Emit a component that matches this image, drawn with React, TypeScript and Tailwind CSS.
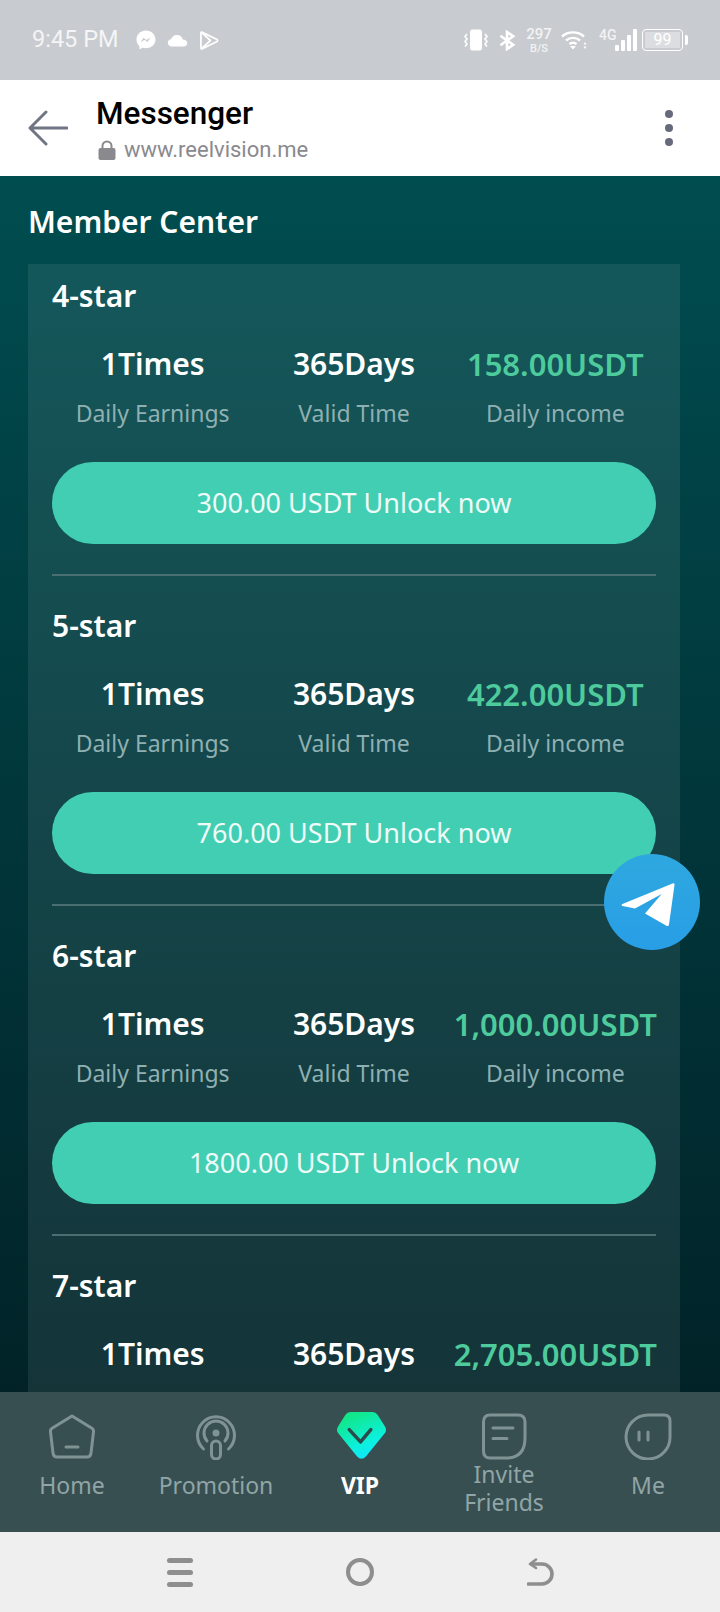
import type { ReactNode } from "react";

const font = { ubuntu: "font-['Noto_Sans',sans-serif]", roboto: "font-['Roboto',sans-serif]" };

const plans = [
  { name: "4-star", income: "158.00USDT", price: "300.00" },
  { name: "5-star", income: "422.00USDT", price: "760.00" },
  { name: "6-star", income: "1,000.00USDT", price: "1800.00" },
];

function StatusBar() {
  return (
    <div className="h-[80px] shrink-0 bg-[#c8cbcf] flex items-center justify-between pl-[32px] pr-[32px] text-white">
      <div className="flex items-center">
        <span className={`${font.roboto} text-[23.5px] leading-none text-[#f4f5f6]`}>9:45 PM</span>
        <svg viewBox="0 0 20 20" className="w-[20px] h-[20px] ml-[18px]" fill="#fff">
          <path d="M10 0.5C4.6 0.5 0.5 4.4 0.5 9.6c0 2.7 1.1 5 2.9 6.6v3.3l3.1-1.7c1.1.3 2.3.5 3.5.5 5.4 0 9.5-3.9 9.5-8.7S15.4.5 10 .5z" />
          <path d="M4.5 12.3l3-4.6 3 2.3 4-2.5-3 4.6-3-2.3z" fill="#c8cbcf" />
        </svg>
        <svg viewBox="0 0 22 14" className="w-[21px] h-[13px] ml-[11px]" fill="#fff">
          <path d="M5 13.5C2.3 13.5.5 11.7.5 9.5c0-2 1.500-3.600 3.500-3.800C4.800 3 7.200 1 10.500 1c3.200 0 5.700 2.100 6.200 5 2.700 0 4.800 1.500 4.800 3.900 0 2-1.600 3.600-4 3.600z" />
        </svg>
        <svg viewBox="0 0 20 22" className="w-[19px] h-[21px] ml-[12px]" fill="none" stroke="#fff" strokeWidth="1.8" strokeLinejoin="round">
          <path d="M2 2.2 L18 10 Q19 11 18 12 L2 19.8 Q1 20 1 19 V3 Q1 2 2 2.2Z" />
          <path d="M1.5 2.5 L11 11 L1.5 19.5" />
        </svg>
      </div>
      <div className="flex items-center">
        <svg viewBox="0 0 24 22" className="w-[24px] h-[22px]" fill="#fff">
          <rect x="6" y="0.5" width="12" height="21" rx="2.5" />
          <path d="M3 5 L1 7.5 L3 10 L1 12.500 L3 15 L1 17.500" fill="none" stroke="#fff" strokeWidth="1.6" />
          <path d="M21 5 L23 7.5 L21 10 L23 12.500 L21 15 L23 17.500" fill="none" stroke="#fff" strokeWidth="1.6" />
        </svg>
        <svg viewBox="0 0 18 22" className="w-[17px] h-[21px] ml-[11px]" fill="none" stroke="#fff" strokeWidth="2.8">
          <path d="M1.5 6 L15 15.5 L8.5 20 V2 L15 6.5 L1.5 16" />
        </svg>
        <div className={`${font.roboto} ml-[11px] flex flex-col items-center font-medium text-[#f2f3f4] w-[24px]`}>
          <span className="text-[15px] leading-[15px]">297</span>
          <span className="text-[11px] leading-[11px] mt-[1px]">B/S</span>
        </div>
        <svg viewBox="0 0 26 20" className="w-[26px] h-[20px] ml-[10px]" fill="none" stroke="#fff" strokeWidth="2.4">
          <path d="M1 6.5C7 1 17 1 23 6.5" />
          <path d="M5 10.5C9 7 15 7 19 10.5" />
          <path d="M8.5 14C10.5 12.5 13.5 12.5 15.5 14" />
          <path d="M12 19.5 L9 16 H15Z" fill="#fff" stroke="none" />
          <path d="M24 12 L22.500 14.5 H25.500Z M24 19 L22.500 16.5 H25.500Z" fill="#fff" stroke="none" />
        </svg>
        <div className="relative ml-[12px] w-[37px] h-[22px]">
          <span className={`${font.roboto} absolute left-0 top-[-1px] text-[14px] leading-[14px] font-medium text-[#f2f3f4]`}>4G</span>
          <div className="absolute left-[16px] bottom-0 flex items-end gap-[2.5px]">
            <span className="w-[3.5px] h-[6px] bg-white rounded-[1px]" />
            <span className="w-[3.5px] h-[11px] bg-white rounded-[1px]" />
            <span className="w-[3.5px] h-[16px] bg-white rounded-[1px]" />
            <span className="w-[3.5px] h-[22px] bg-white rounded-[1px]" />
          </div>
        </div>
        <div className="ml-[6px] w-[41px] h-[22px] border-[1.5px] border-white rounded-[4px] p-[2px] flex">
          <div className={`${font.roboto} flex-1 bg-[#dcdde0] flex items-center justify-center text-[16px] leading-none text-white`}>99</div>
        </div>
        <span className="ml-[2px] w-[3px] h-[10px] bg-white rounded-r-[2px]" />
      </div>
    </div>
  );
}

function TopBar() {
  return (
    <div className="h-[96px] shrink-0 bg-white flex items-center pl-[28px] pr-[48px]">
      <svg viewBox="0 0 40 36" className="w-[40px] h-[36px]" fill="none" stroke="#6f7583" strokeWidth="3" strokeLinecap="round" strokeLinejoin="round">
        <path d="M39 18 H2 M18 2 L2 18 L18 34" />
      </svg>
      <div className={`${font.roboto} ml-[28px] flex-1 mt-[4px]`}>
        <div className="text-[31.5px] leading-[36px] font-medium text-black">Messenger</div>
        <div className="flex items-center mt-[4px] ml-[2px]">
          <svg viewBox="0 0 18 20" className="w-[18px] h-[20px]" fill="#8a8a8e">
            <path d="M4.5 9V6a4.500 4.500 0 0 1 9 0v3" fill="none" stroke="#8a8a8e" strokeWidth="2" />
            <rect x="0.5" y="8" width="17" height="12" rx="2" />
          </svg>
          <span className="ml-[8px] text-[22px] leading-[28px] text-[#8a8a8e]">www.reelvision.me</span>
        </div>
      </div>
      <div className="flex flex-col gap-[6px] mr-[-1px]">
        <span className="w-[8px] h-[8px] rounded-full bg-[#666a7a]" />
        <span className="w-[8px] h-[8px] rounded-full bg-[#666a7a]" />
        <span className="w-[8px] h-[8px] rounded-full bg-[#666a7a]" />
      </div>
    </div>
  );
}

function Stat({ value, label, green }: { value: string; label?: string; green?: boolean }) {
  return (
    <div className="flex flex-col items-center">
      <div className={`leading-[40px] font-semibold whitespace-nowrap ${green ? "text-[31px] text-[#4ecb9c]" : "text-[30px] text-white"}`}>{value}</div>
      {label && <div className="text-[23px] leading-[32px] mt-[13px] text-[#8fb0b2] whitespace-nowrap">{label}</div>}
    </div>
  );
}

function PlanCard({ name, income, price }: { name: string; income: string; price: string }) {
  return (
    <div className="border-b-2 border-[#4a6f73] pb-[30px] mb-[30px]">
      <div className="text-[30px] leading-[40px] font-semibold text-white">{name}</div>
      <div className="grid grid-cols-3 mt-[28px]">
        <Stat value="1Times" label="Daily Earnings" />
        <Stat value="365Days" label="Valid Time" />
        <Stat value={income} label="Daily income" green />
      </div>
      <div className="mt-[33px] h-[82px] rounded-full bg-[#42ceb2] flex items-center justify-center text-[27px] text-[#eefbf8]">
        {price} USDT Unlock now
      </div>
    </div>
  );
}

function NavItem({ icon, label, active, twoLine }: { icon: ReactNode; label: ReactNode; active?: boolean; twoLine?: boolean }) {
  return (
    <div className="flex flex-col items-center pt-[20px]">
      {icon}
      <div className={`h-[56px] flex items-center text-center text-[23px] leading-[28px] ${twoLine ? "" : "pb-[6px]"} ${active ? "text-white font-bold" : "text-[#90a5a6]"}`}>
        {label}
      </div>
    </div>
  );
}

const navStroke = { fill: "none", stroke: "#7f9394", strokeWidth: 3, strokeLinecap: "round" as const, strokeLinejoin: "round" as const };

function BottomNav() {
  return (
    <div className="h-[140px] shrink-0 bg-[#384f51] grid grid-cols-5">
      <NavItem
        label="Home"
        icon={
          <svg viewBox="0 0 48 48" className="w-[48px] h-[48px]" {...navStroke}>
            <path d="M24 4 L43.500 16 Q46 17.500 45.500 20 L43 41 Q42.500 45 39 45 L9 45 Q5.500 45 5 41 L2.500 20 Q2 17.500 4.500 16 Z" />
            <path d="M18 35 H30" />
          </svg>
        }
      />
      <NavItem
        label="Promotion"
        icon={
          <svg viewBox="0 0 48 48" className="w-[48px] h-[48px]" {...navStroke}>
            <path d="M11.500 37 A18.500 18.500 0 1 1 36.500 37" />
            <path d="M15 29 A12 12 0 1 1 33 29" />
            <circle cx="24" cy="21" r="3.500" fill="#7f9394" stroke="none" />
            <rect x="19.500" y="29" width="9" height="18" rx="4.500" />
          </svg>
        }
      />
      <NavItem
        active
        label="VIP"
        icon={
          <svg viewBox="0 0 52 49" className="w-[52px] h-[48px] ml-[3px]">
            <defs>
              <linearGradient id="vipFill" x1="0.2" y1="0" x2="0.7" y2="1">
                <stop offset="0.1" stopColor="#11e78a" />
                <stop offset="0.7" stopColor="#0cf0e0" />
                <stop offset="1" stopColor="#10e6ff" />
              </linearGradient>
            </defs>
            <path d="M14 0 H37 Q40 0 42 3 L49 14 Q52 18.500 49 22 L30 45.500 Q25.500 50 21 45.500 L2 22 Q-1 18.500 2 14 L9 3 Q11 0 14 0Z" fill="url(#vipFill)" />
            <path d="M13 18 L24.500 30.500 L35 18" fill="none" stroke="#2c4a4c" strokeWidth="3.6" strokeLinecap="round" strokeLinejoin="round" />
          </svg>
        }
      />
      <NavItem
        twoLine
        label={<span>Invite<br />Friends</span>}
        icon={
          <svg viewBox="0 0 48 48" className="w-[48px] h-[48px]" {...navStroke}>
            <path d="M10 3 H38 Q45 3 45 10 V26 Q45 46 26 46 H10 Q3.500 46 3.500 39 V10 Q3.500 3 10 3Z" />
            <path d="M13 16 H33 M13 26.500 H27" />
          </svg>
        }
      />
      <NavItem
        label="Me"
        icon={
          <svg viewBox="0 0 48 48" className="w-[48px] h-[48px]" {...navStroke}>
            <path d="M24 3 H40 Q46 3 46 9 V24 A22 22 0 1 1 24 3Z" />
            <path d="M15 20 V28 M24 20 V28" />
          </svg>
        }
      />
    </div>
  );
}

function SystemBar() {
  return (
    <div className="h-[80px] shrink-0 bg-[#efefef] grid grid-cols-3 items-center px-[90px]">
      <div className="flex flex-col items-center gap-[7px]">
        <span className="w-[26px] h-[5px] rounded-full bg-[#8e8e8e]" />
        <span className="w-[26px] h-[5px] rounded-full bg-[#8e8e8e]" />
        <span className="w-[26px] h-[5px] rounded-full bg-[#8e8e8e]" />
      </div>
      <div className="flex justify-center">
        <span className="w-[28px] h-[28px] rounded-full border-[4px] border-[#8e8e8e]" />
      </div>
      <div className="flex justify-center">
        <svg viewBox="0 0 27 28" className="w-[27px] h-[28px]" fill="none" stroke="#8e8e8e" strokeWidth="3.6" strokeLinecap="round" strokeLinejoin="round">
          <path d="M1.500 26 H15 A9.500 9.500 0 0 0 15 6 H5" />
          <path d="M9 1.500 L3 6 L9 10" strokeWidth="2.6" />
        </svg>
      </div>
    </div>
  );
}

export default function App() {
  return (
    <div className={`${font.ubuntu} relative w-[720px] h-[1612px] overflow-hidden flex flex-col`}>
      <StatusBar />
      <TopBar />
      <div className="flex-1 min-h-0 overflow-hidden bg-gradient-to-b from-[#004d50] to-[#012328] pl-[28px] pr-[40px]">
        <div className="text-[30px] leading-[40px] font-semibold text-white pt-[26px] pb-[22px]">Member Center</div>
        <div className="bg-white/8 px-[24px] pt-[12px] pb-[30px]">
          {plans.map((p) => (
            <PlanCard key={p.name} {...p} />
          ))}
          <div className="text-[30px] leading-[40px] font-semibold text-white">7-star</div>
          <div className="grid grid-cols-3 mt-[28px]">
            <Stat value="1Times" />
            <Stat value="365Days" />
            <Stat value="2,705.00USDT" green />
          </div>
        </div>
      </div>
      <BottomNav />
      <SystemBar />
      {/* telegram floating button */}
      <div className="absolute left-[604px] top-[854px] w-[96px] h-[96px] rounded-full bg-gradient-to-b from-[#2ea8df] to-[#289ee6]">
        <svg viewBox="0 0 96 96" className="w-[96px] h-[96px]" fill="#fff">
          <path d="M68.500 29.500 Q71 28.500 70.500 31 L65 70.500 Q64.500 73 62 71.500 L41 59.500 L57.700 40 L31 54.500 L18.500 52 Q16.500 51 18.500 50 Z" />
        </svg>
      </div>
    </div>
  );
}
